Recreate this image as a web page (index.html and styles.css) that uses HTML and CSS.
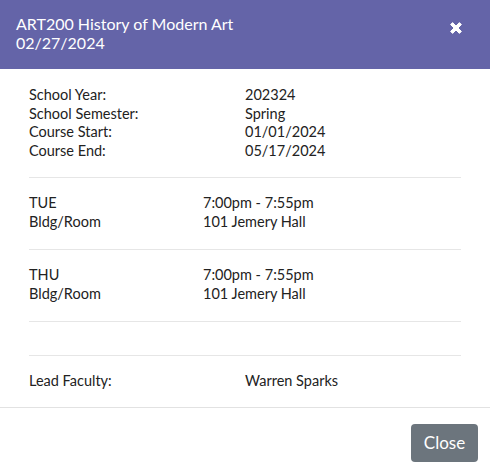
FILE: index.html
```html
<!DOCTYPE html>
<html>
<head>
<meta charset="utf-8">
<link rel="stylesheet" href="styles.css">
</head>
<body>
<div class="modal">
  <div class="modal-header">
    <div class="title">
      <div>ART200 History of Modern Art</div>
      <div>02/27/2024</div>
    </div>
    <button class="close-x" aria-label="Close">
      <svg width="14" height="14" viewBox="0 0 14 14"><path d="M1.6 3.6 L3.6 1.6 L7 5 L10.4 1.6 L12.4 3.6 L9 7 L12.4 10.4 L10.4 12.4 L7 9 L3.6 12.4 L1.6 10.4 L5 7 Z" fill="#fff" stroke="#fff" stroke-width="1" stroke-linejoin="round"/></svg>
    </button>
  </div>
  <div class="modal-body">
    <div class="section first half">
      <div>School Year:</div><div>202324</div>
      <div>School Semester:</div><div>Spring</div>
      <div>Course Start:</div><div>01/01/2024</div>
      <div>Course End:</div><div>05/17/2024</div>
    </div>
    <div class="section split">
      <div>TUE</div><div>7:00pm - 7:55pm</div>
      <div>Bldg/Room</div><div>101 Jemery Hall</div>
    </div>
    <div class="section split">
      <div>THU</div><div>7:00pm - 7:55pm</div>
      <div>Bldg/Room</div><div>101 Jemery Hall</div>
    </div>
    <div class="section empty"></div>
    <div class="section half last">
      <div>Lead Faculty:</div><div>Warren Sparks</div>
    </div>
  </div>
  <div class="modal-footer">
    <button class="btn">Close</button>
  </div>
</div>
</body>
</html>
```
FILE: styles.css
```css
* { box-sizing: border-box; }
html, body { margin: 0; padding: 0; background: #fff; }
body {
  font-family: "Lato", "Open Sans", sans-serif;
  color: #222;
  font-size: 14.5px;
  line-height: 18.5px;
}
.modal { width: 490px; }
.modal-header {
  background: #6464a8;
  color: #fff;
  height: 69px;
  padding: 14px 16px 0 16px;
  display: flex;
  justify-content: space-between;
  align-items: flex-start;
  font-size: 16px;
  line-height: 19px;
}
.close-x {
  background: none;
  border: 0;
  padding: 0;
  margin: 7px 11px 0 0;
  width: 14px;
  height: 14px;
  display: block;
}
.close-x svg { display: block; }
.modal-body { padding: 0 29px; }
.section {
  display: grid;
  padding: 16px 0 18px;
  border-bottom: 1px solid #e6e6e6;
}
.section.first { padding-top: 17px; padding-bottom: 17px; }
.section.half { grid-template-columns: 216px 1fr; }
.section.split { grid-template-columns: 174px 1fr; }
.section.empty { height: 34px; padding: 0; }
.section.last { border-bottom: 0; padding-bottom: 16px; }
.modal-footer {
  border-top: 1px solid #e2e2e2;
  display: flex;
  justify-content: flex-end;
  padding: 16px 12px 0 0;
}
.btn {
  background: #6c757d;
  color: #fff;
  border: 0;
  border-radius: 4px;
  font-family: "Lato", "Open Sans", sans-serif;
  font-size: 17px;
  width: 67px;
  height: 38px;
  padding: 0;
}
```
